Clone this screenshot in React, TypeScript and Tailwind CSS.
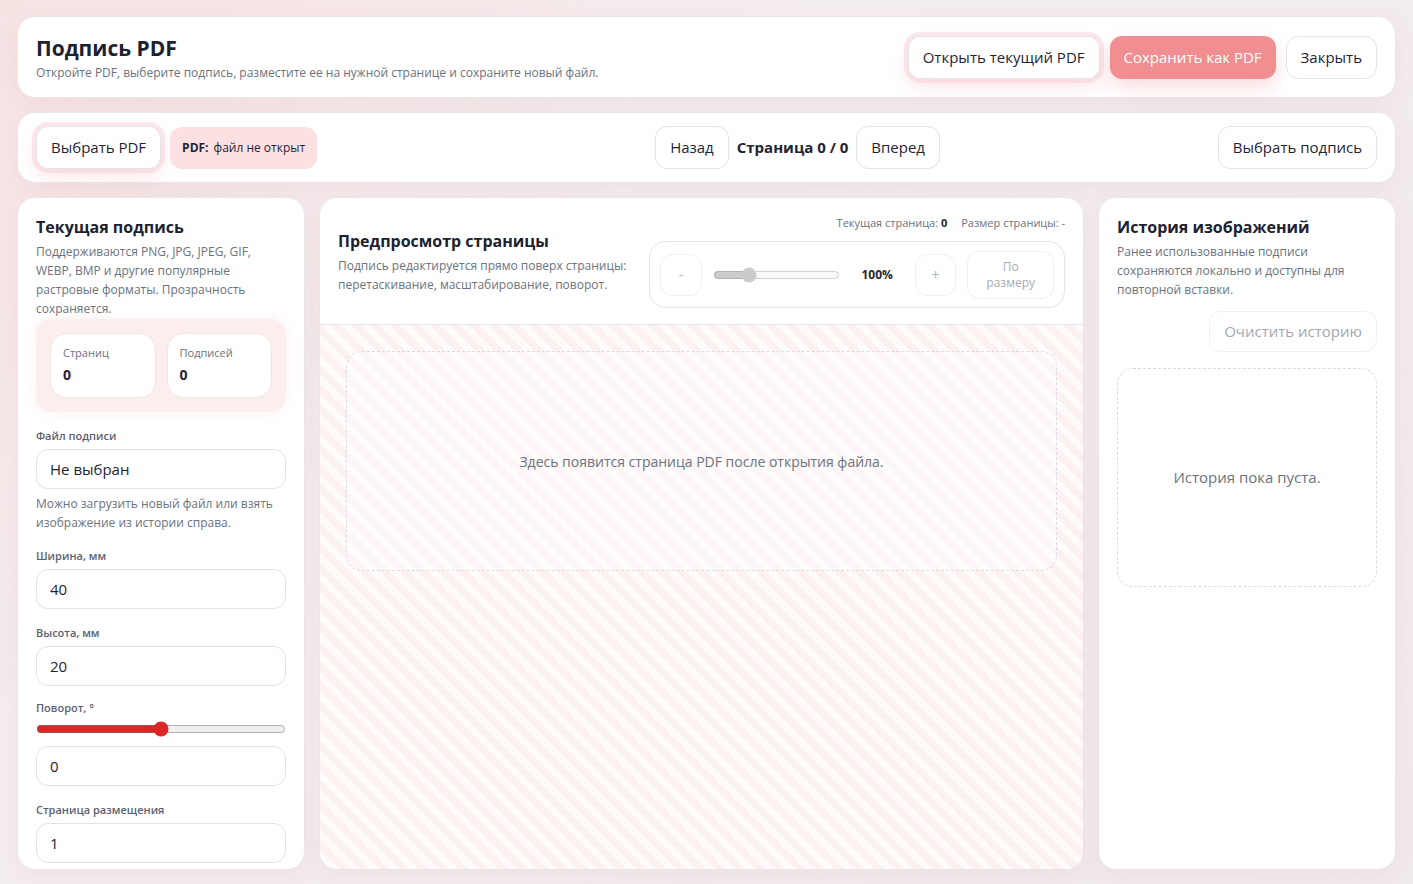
const card =
  "rounded-[18px] border border-[#ebe5e8] bg-white shadow-[0_6px_22px_rgba(160,120,130,0.08)]";
const btn =
  "h-[43px] rounded-xl border border-[#e3e4e8] bg-white px-[14px] text-[15px] text-[#1f2433] whitespace-nowrap";
const glow =
  "shadow-[0_0_0_4px_rgba(249,205,210,0.45),0_8px_18px_rgba(240,140,150,0.22)]";
const input =
  "h-10 w-full rounded-xl border border-[#e2e3e8] bg-white px-[13px] text-[15px] text-[#1f2433] outline-none";
const label = "mb-[5px] text-[11px] font-semibold leading-4 text-[#5b6170]";

function Field({ title, value }: { title: string; value: string }) {
  return (
    <div>
      <div className={label}>{title}</div>
      <input className={input} defaultValue={value} />
    </div>
  );
}

function Stat({ title }: { title: string }) {
  return (
    <div className="h-[65px] rounded-2xl border border-[#f3e4e6] bg-white px-3 pt-[11px]">
      <div className="text-[11px] leading-4 text-[#6b7280]">{title}</div>
      <div className="mt-[4px] text-[14px] font-bold leading-5 text-[#1f2433]">0</div>
    </div>
  );
}

function LeftPanel() {
  return (
    <aside className={`${card} overflow-hidden px-[18px] pt-[17px]`}>
      <h2 className="text-[16px] font-bold leading-6 text-[#1c2230]">Текущая подпись</h2>
      <p className="mt-[3px] text-[12px] leading-[19px] text-[#6b7280]">
        Поддерживаются PNG, JPG, JPEG, GIF, WEBP, BMP и другие популярные растровые форматы. Прозрачность
        сохраняется.
      </p>
      <div className="mt-[1px] grid grid-cols-2 gap-[11px] rounded-2xl bg-[#fdeeee] px-[14px] py-[14px] shadow-[0_0_12px_rgba(249,205,210,0.35)]">
        <Stat title="Страниц" />
        <Stat title="Подписей" />
      </div>
      <div className="mt-[16px] flex flex-col gap-[16px]">
        <div>
          <div className={label}>Файл подписи</div>
          <input className={input} defaultValue="Не выбран" />
          <p className="mt-[5px] text-[12px] leading-[19px] text-[#6b7280]">
            Можно загрузить новый файл или взять изображение из истории справа.
          </p>
        </div>
        <Field title="Ширина, мм" value="40" />
        <Field title="Высота, мм" value="20" />
        <div className="-mt-[2px]">
          <div className={label}>Поворот, °</div>
          <input
            type="range"
            min={-180}
            max={180}
            defaultValue={0}
            className="my-[3px] block h-4 w-full accent-[#dc2626]"
          />
          <input className={`${input} mt-[6px]`} defaultValue="0" />
        </div>
        <Field title="Страница размещения" value="1" />
      </div>
    </aside>
  );
}

function PreviewPanel() {
  return (
    <section className={`${card} flex min-h-0 flex-col overflow-hidden`}>
      <div className="flex items-start justify-between border-b border-[#e6e6ea] px-[18px] pb-4 pt-[17px]">
        <div className="mt-[14px]">
          <h2 className="text-[16px] font-bold leading-6 text-[#1c2230]">Предпросмотр страницы</h2>
          <p className="mt-[3px] text-[12px] leading-[19px] text-[#6b7280]">
            Подпись редактируется прямо поверх страницы:
            <br />
            перетаскивание, масштабирование, поворот.
          </p>
        </div>
        <div className="flex flex-col items-end">
          <div className="flex gap-[14px] text-[11px] leading-4 text-[#6b7280]">
            <span>
              Текущая страница: <b className="text-[#1f2433]">0</b>
            </span>
            <span>Размер страницы: -</span>
          </div>
          <div className="mt-[10px] flex h-[67px] w-[416px] items-center gap-[11px] rounded-2xl border border-[#e4e4e8] px-[10px]">
            <button className="h-[42px] w-[42px] rounded-xl border border-[#efeff2] text-[14px] text-[#b0b4bd]">-</button>
            <input type="range" disabled defaultValue={25} className="h-4 w-[127px]" />
            <span className="w-[53px] text-center text-[12px] font-bold text-[#1f2433]">100%</span>
            <button className="h-[42px] w-[42px] rounded-xl border border-[#efeff2] text-[15px] text-[#b0b4bd]">+</button>
            <button className="h-12 w-[87px] rounded-xl border border-[#efeff2] text-[12px] leading-4 text-[#a7abb4]">
              По
              <br />
              размеру
            </button>
          </div>
        </div>
      </div>
      <div className="flex-1 bg-[repeating-linear-gradient(45deg,#fdf0f1_0px,#fdf0f1_7px,#fffbfb_7px,#fffbfb_14px)] p-[26px]">
        <div className="flex h-[220px] items-center justify-center rounded-2xl border border-dashed border-[#dcdce0] bg-white/40 text-[14px] text-[#6b7280]">
          Здесь появится страница PDF после открытия файла.
        </div>
      </div>
    </section>
  );
}

function HistoryPanel() {
  return (
    <aside className={`${card} px-[18px] pt-[17px]`}>
      <h2 className="text-[16px] font-bold leading-6 text-[#1c2230]">История изображений</h2>
      <p className="mt-[3px] text-[12px] leading-[19px] text-[#6b7280]">
        Ранее использованные подписи сохраняются локально и доступны для повторной вставки.
      </p>
      <div className="mt-[12px] flex justify-end">
        <button className="h-[41px] rounded-xl border border-[#f0f0f3] px-[14px] text-[15px] text-[#a3a7b0]">
          Очистить историю
        </button>
      </div>
      <div className="mt-[16px] flex h-[219px] items-center justify-center rounded-2xl border border-dashed border-[#dcdce0] text-[15px] text-[#6b7280]">
        История пока пуста.
      </div>
    </aside>
  );
}

export default function App() {
  return (
    <div className="flex h-screen flex-col gap-[14px] overflow-hidden bg-[linear-gradient(135deg,#f8e3e3_0%,#f4edef_35%,#f1eaed_100%)] px-[17px] pb-[14px] pt-[16px] font-['Open_Sans',sans-serif]">
      <header className={`${card} flex h-[82px] shrink-0 items-center justify-between px-[18px]`}>
        <div>
          <h1 className="text-[21px] font-bold leading-7 text-[#1c2230]">Подпись PDF</h1>
          <p className="mt-[3px] text-[12px] leading-4 text-[#6b7280]">
            Откройте PDF, выберите подпись, разместите ее на нужной странице и сохраните новый файл.
          </p>
        </div>
        <div className="flex items-center gap-[10px]">
          <button className={`${btn} ${glow}`}>Открыть текущий PDF</button>
          <button className="h-[43px] rounded-xl bg-[#f08e92] px-[14px] text-[15px] text-white shadow-[0_8px_18px_rgba(240,140,150,0.3)]">
            Сохранить как PDF
          </button>
          <button className={btn}>Закрыть</button>
        </div>
      </header>

      <div className={`${card} flex h-[71px] shrink-0 items-center px-[18px]`}>
        <div className="flex items-center gap-[9px]">
          <button className={`${btn} ${glow}`}>Выбрать PDF</button>
          <div className="flex h-[42px] items-center gap-[5px] rounded-xl bg-[#fde1e2] px-3 text-[12px] text-[#1f2433]">
            <b>PDF:</b>
            <span>файл не открыт</span>
          </div>
        </div>
        <div className="ml-[338px] flex items-center gap-[8px]">
          <button className={btn}>Назад</button>
          <span className="text-[15px] font-bold text-[#1f2433]">Страница 0 / 0</span>
          <button className={btn}>Вперед</button>
        </div>
        <button className={`${btn} ml-auto`}>Выбрать подпись</button>
      </div>

      <main className="grid min-h-0 flex-1 grid-cols-[288px_1fr_298px] gap-[14px]">
        <LeftPanel />
        <PreviewPanel />
        <HistoryPanel />
      </main>
    </div>
  );
}
